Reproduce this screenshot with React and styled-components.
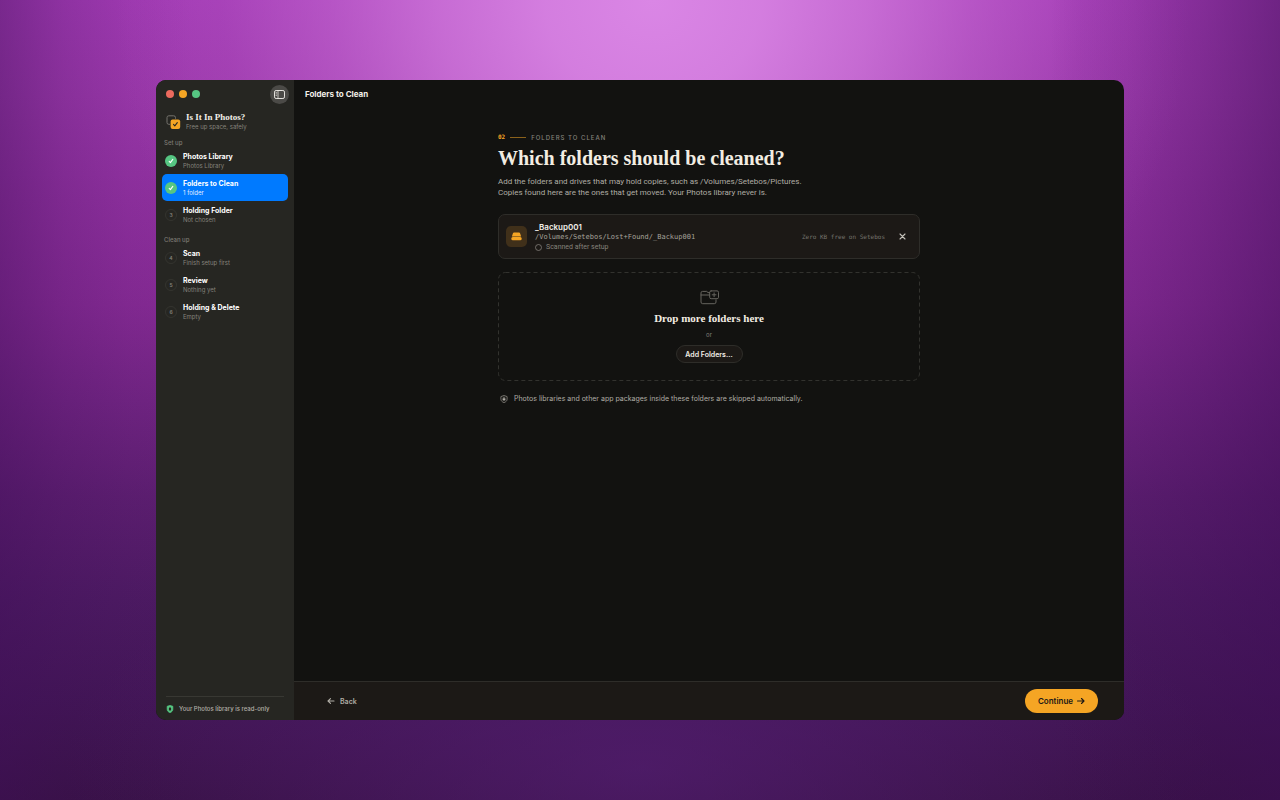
import React from 'react';
import styled, { createGlobalStyle, css } from 'styled-components';

const sans = 'Inter, "Liberation Sans", sans-serif';
const serif = '"Liberation Serif", serif';
const mono = '"DejaVu Sans Mono", monospace';

const GlobalStyle = createGlobalStyle`
  *, *::before, *::after { box-sizing: border-box; }
  body { margin: 0; font-family: ${sans}; font-size: 7px; color: #f2efe8; }
  h1, h2, h3, p, ul { margin: 0; padding: 0; }
  ul { list-style: none; }
  button { font-family: inherit; margin: 0; padding: 0; border: 0; background: none; color: inherit; cursor: pointer; }
  svg { display: block; flex: none; }
`;

const Desktop = styled.div`
  min-height: 100vh;
  display: flex;
  padding: 80px 156px;
  background:
    linear-gradient(90deg, rgba(64, 14, 88, 0.42) 0%, rgba(64, 14, 88, 0.2) 5%, rgba(64, 14, 88, 0.06) 10%, rgba(64, 14, 88, 0) 15%, rgba(60, 12, 84, 0) 82%, rgba(60, 12, 84, 0.12) 88%, rgba(60, 12, 84, 0.3) 94%, rgba(60, 12, 84, 0.5) 100%),
    radial-gradient(ellipse 42% 64% at 51% 0%, rgba(218, 134, 229, 1) 0%, rgba(216, 131, 227, 0.92) 20%, rgba(212, 124, 223, 0.74) 40%, rgba(204, 112, 216, 0.48) 60%, rgba(192, 96, 206, 0.2) 80%, rgba(180, 80, 196, 0) 100%),
    radial-gradient(ellipse 45% 32% at 50% 96%, rgba(88, 32, 120, 0.6) 0%, rgba(80, 28, 110, 0) 100%),
    linear-gradient(180deg, #a23bb4 0%, #9a38aa 12%, #8e309e 25%, #842a93 38%, #702482 50%, #5c1e70 62%, #4c1a62 75%, #421656 87%, #381246 100%);
`;

const Window = styled.div`
  flex: 1;
  display: flex;
  overflow: hidden;
  border-radius: 10px;
  background: #121210;
`;

const Sidebar = styled.aside`
  width: 138px;
  flex: none;
  display: flex;
  flex-direction: column;
  background: #262622;
`;

const SidebarBar = styled.div`
  height: 28px;
  display: flex;
  align-items: center;
  gap: 5px;
  padding: 0 5px 0 10px;
`;

const Light = styled.button`
  && { background: ${(p) => p.$color}; }
  width: 8px;
  height: 8px;
  border-radius: 50%;
`;

const ToggleButton = styled.button`
  && { background: #4b4a47; }
  width: 19px;
  height: 19px;
  margin-left: auto;
  border-radius: 50%;
  display: grid;
  place-items: center;
`;

const Brand = styled.div`
  display: flex;
  align-items: center;
  gap: 5px;
  height: 27px;
  padding: 0 10px;
`;

const BrandName = styled.div`
  font: bold 9px/10px ${serif};
  color: #f2efe8;
`;

const Muted = styled.div`
  font-size: 6px;
  line-height: 9px;
  color: ${(p) => p.$color || '#85827b'};
`;

const GroupTitle = styled.h2`
  font-size: 6px;
  line-height: 8px;
  font-weight: 500;
  color: #7d7a73;
  padding: 0 8px;
  margin: ${(p) => (p.$later ? '8px' : '4px')} 0 0;
`;

const Step = styled.button`
  && { background: ${(p) => (p.$active ? '#007aff' : 'transparent')}; }
  width: calc(100% - 12px);
  height: 27px;
  margin: 0 6px;
  padding: 0 3px;
  display: flex;
  align-items: center;
  gap: 6px;
  border-radius: 5px;
  text-align: left;
`;

const StepName = styled.div`
  font-size: 7px;
  line-height: 9px;
  font-weight: 700;
  color: #fff;
`;

const Marker = styled.span`
  width: 12px;
  height: 12px;
  flex: none;
  display: grid;
  place-items: center;
  border-radius: 50%;
  font-size: 5px;
  font-weight: 600;
  color: #85827b;
  ${(p) => (p.$done ? css`background: #56c682;` : css`border: 1px solid #34342f;`)}
`;

const SidebarFoot = styled.div`
  margin: auto 10px 0;
  height: 24px;
  border-top: 1px solid #383833;
  display: flex;
  align-items: center;
  gap: 5px;
  font-size: 6px;
  font-weight: 500;
  color: #b3b0a8;
`;

const Main = styled.main`
  flex: 1;
  min-width: 0;
  display: flex;
  flex-direction: column;
`;

const TitleBar = styled.header`
  height: 28px;
  flex: none;
  padding: 0 11px;
  display: flex;
  align-items: center;
  font-size: 8px;
  font-weight: 700;
`;

const Content = styled.section`
  flex: 1;
  width: 100%;
  max-width: 422px;
  margin: 0 auto;
  padding-top: 24px;
`;

const Eyebrow = styled.div`
  display: flex;
  align-items: center;
  gap: 5px;
  height: 10px;
  font-size: 6px;
  font-weight: 500;
  letter-spacing: 1px;
  color: #85827b;
`;

const StepNumber = styled.span`
  font: bold 6px/10px ${mono};
  letter-spacing: 0;
  color: #f5a524;
`;

const Rule = styled.span`
  width: 16px;
  height: 1px;
  background: #8a611b;
`;

const Heading = styled.h1`
  margin-top: 3px;
  font: bold 20px/26px ${serif};
  color: #f2ede2;
`;

const Lead = styled.p`
  margin-top: 5px;
  font: 8px/11px Roboto, ${sans};
  color: #b0ada5;
`;

const FolderRow = styled.article`
  margin-top: 16px;
  height: 45px;
  display: flex;
  align-items: center;
  gap: 8px;
  padding: 0 12px 0 7px;
  border: 1px solid #2e2d29;
  border-radius: 7px;
  background: #1c1916;
`;

const Tile = styled.span`
  width: 21px;
  height: 21px;
  display: grid;
  place-items: center;
  border-radius: 5px;
  background: #40301a;
`;

const FolderInfo = styled.div`
  flex: 1;
  padding-top: 2px;
`;

const FolderName = styled.h3`
  font-size: 8px;
  line-height: 10px;
  font-weight: 600;
`;

const Mono = styled.div`
  font: ${(p) => p.$size}px/10px ${mono};
  color: ${(p) => p.$color};
`;

const Status = styled.div`
  display: flex;
  align-items: center;
  gap: 4px;
  font: 7px/11px Roboto, ${sans};
  color: #85827b;
`;

const RemoveButton = styled.button`
  width: 10px;
  height: 10px;
  margin-left: 4px;
  display: grid;
  place-items: center;
`;

const DropZone = styled.div`
  position: relative;
  margin-top: 13px;
  height: 109px;
  display: flex;
  flex-direction: column;
  align-items: center;
  padding-top: 18px;
`;

const Dashes = styled.svg`
  position: absolute;
  inset: 0;
  width: 100%;
  height: 100%;
`;

const DashedEdge = styled.rect`
  width: calc(100% - 1px);
  height: calc(100% - 1px);
  fill: none;
  stroke: #32322e;
  stroke-dasharray: 4 3;
`;

const DropTitle = styled.h3`
  margin-top: 6px;
  font: bold 11px/14px ${serif};
  color: #f2ede2;
`;

const Or = styled.p`
  margin: 6px 0;
  font-size: 6px;
  line-height: 8px;
  color: #85827b;
`;

const AddButton = styled.button`
  && { background: #1c1916; border: 1px solid #2e2d29; }
  width: 67px;
  height: 18px;
  border-radius: 9px;
  font-size: 7px;
  font-weight: 600;
`;

const Note = styled.p`
  margin-top: 13px;
  padding-left: 2px;
  display: flex;
  align-items: center;
  gap: 6px;
  font-size: 7px;
  line-height: 10px;
  color: #b0ada5;
`;

const Footer = styled.footer`
  height: 39px;
  flex: none;
  padding: 0 26px 0 33px;
  display: flex;
  align-items: center;
  justify-content: space-between;
  border-top: 1px solid #2e2d29;
  background: #1c1916;
`;

const BackButton = styled.button`
  display: flex;
  align-items: center;
  gap: 5px;
  font-size: 7px;
  font-weight: 600;
  && { color: #b0ada5; }
`;

const ContinueButton = styled.button`
  && { background: #f5a524; color: #1c1916; }
  width: 73px;
  height: 24px;
  display: flex;
  align-items: center;
  justify-content: center;
  gap: 4px;
  border-radius: 12px;
  font-size: 8px;
  font-weight: 600;
`;

const Check = () => (
  <svg width="6" height="6" viewBox="0 0 6 6" fill="none" stroke="#fff" strokeWidth="1.1" strokeLinecap="round" strokeLinejoin="round">
    <path d="M1.2 3.3 2.4 4.6 4.8 1.4" />
  </svg>
);

const Arrow = ({ back }) => (
  <svg width="8" height="8" viewBox="0 0 8 8" fill="none" stroke="currentColor" strokeWidth="1.1" strokeLinecap="round" strokeLinejoin="round">
    <path d={back ? 'M7 4H1M3.5 1.6 1 4l2.5 2.4' : 'M.5 4H7M4.5 1.5 7 4 4.5 6.5'} />
  </svg>
);

const SidebarIcon = () => (
  <svg width="11" height="9" viewBox="0 0 11 9" fill="none" stroke="#e4e2dd" strokeWidth="1">
    <rect x=".5" y=".5" width="10" height="8" rx="1.6" />
    <path d="M4 .5v8M1.6 2.4h1.2M1.6 3.9h1.2M1.6 5.4h1.2" strokeWidth=".8" />
  </svg>
);

const BrandIcon = () => (
  <svg width="15" height="14" viewBox="0 0 15 14" fill="none">
    <rect x="1" y=".8" width="8.5" height="8.5" rx="1.8" stroke="#75736d" strokeWidth="1" />
    <rect x="4" y="3.8" width="11" height="11" rx="2.6" fill="#262622" />
    <rect x="4.6" y="4.4" width="9.6" height="9.6" rx="2" fill="#f5a524" />
    <path d="m7.5 9.4 1.3 1.4 2.5-3.2" stroke="#262622" strokeWidth="1.1" strokeLinecap="round" strokeLinejoin="round" />
  </svg>
);

const LockShield = () => (
  <svg width="8" height="8" viewBox="0 0 8 8">
    <path d="M4 .5 6.8 1.3v3C6.8 6 5.7 7 4 7.6 2.3 7 1.2 6 1.2 4.3v-3Z" fill="#56c682" stroke="#56c682" strokeWidth=".8" strokeLinejoin="round" />
    <rect x="2.9" y="2.6" width="2.2" height="2.8" rx=".5" fill="#262622" />
  </svg>
);

const ShieldOutline = () => (
  <svg width="8" height="8" viewBox="0 0 8 8">
    <path d="M4 .5 7.1 1.6v2.6C7.1 5.8 5.8 7 4 7.6 2.2 7 .9 5.8.9 4.2V1.6Z" fill="none" stroke="#8b8881" strokeWidth=".8" strokeLinejoin="round" />
    <rect x="2.6" y="3.2" width="2.8" height="2.3" rx=".4" fill="#b0ada5" />
    <path d="M3.2 3.3v-.4a.8.8 0 0 1 1.6 0v.4" fill="none" stroke="#b0ada5" strokeWidth=".5" />
  </svg>
);

const DriveIcon = () => (
  <svg width="11" height="9" viewBox="0 0 11 9" fill="#f5a524">
    <path d="M3.600.6h3.800c1 0 1.600.5 1.900 1.300l.8 2.600H.9l.8-2.600C2 1.100 2.600.6 3.600.6Z" />
    <rect x=".3" y="5" width="10.400" height="3.300" rx="1.500" />
  </svg>
);

const FolderPlus = () => (
  <svg width="20" height="15" viewBox="0 0 20 15" fill="none" stroke="#66645e" strokeWidth="1" strokeLinecap="round" strokeLinejoin="round">
    <path d="M10.500 2.600H9L7.700 1.400H3.500A1.500 1.500 0 0 0 2 2.900v9.100a1.700 1.700 0 0 0 1.700 1.700h11.600a1.700 1.700 0 0 0 1.700-1.700V9.800M2 5h8.500" />
    <rect x="10.700" y=".9" width="8.800" height="7.800" rx="1.400" />
    <path d="M15.100 2.900v3.800M13.200 4.800H17" />
  </svg>
);

const StepItem = ({ name, detail, number, done, active }) => (
  <li>
    <Step type="button" $active={active} aria-current={active ? 'step' : undefined}>
      <Marker $done={done}>{done ? <Check /> : number}</Marker>
      <div>
        <StepName>{name}</StepName>
        <Muted $color={active ? '#e4efff' : undefined}>{detail}</Muted>
      </div>
    </Step>
  </li>
);

export default function App() {
  return (
    <>
      <GlobalStyle />
      <Desktop>
        <Window>
          <Sidebar>
            <SidebarBar>
              <Light type="button" aria-label="Close" $color="#ec6a5e" />
              <Light type="button" aria-label="Minimize" $color="#f5a524" />
              <Light type="button" aria-label="Zoom" $color="#56c682" />
              <ToggleButton type="button" aria-label="Toggle sidebar"><SidebarIcon /></ToggleButton>
            </SidebarBar>
            <Brand>
              <BrandIcon />
              <div>
                <BrandName>Is It In Photos?</BrandName>
                <Muted>Free up space, safely</Muted>
              </div>
            </Brand>
            <nav aria-label="Steps">
              <GroupTitle>Set up</GroupTitle>
              <ul>
                <StepItem name="Photos Library" detail="Photos Library" done />
                <StepItem name="Folders to Clean" detail="1 folder" done active />
                <StepItem name="Holding Folder" detail="Not chosen" number="3" />
              </ul>
              <GroupTitle $later>Clean up</GroupTitle>
              <ul>
                <StepItem name="Scan" detail="Finish setup first" number="4" />
                <StepItem name="Review" detail="Nothing yet" number="5" />
                <StepItem name="Holding &amp; Delete" detail="Empty" number="6" />
              </ul>
            </nav>
            <SidebarFoot><LockShield />Your Photos library is read-only</SidebarFoot>
          </Sidebar>
          <Main>
            <TitleBar>Folders to Clean</TitleBar>
            <Content>
              <Eyebrow><StepNumber>02</StepNumber><Rule />FOLDERS TO CLEAN</Eyebrow>
              <Heading>Which folders should be cleaned?</Heading>
              <Lead>
                Add the folders and drives that may hold copies, such as /Volumes/Setebos/Pictures.<br />
                Copies found here are the ones that get moved. Your Photos library never is.
              </Lead>
              <FolderRow>
                <Tile><DriveIcon /></Tile>
                <FolderInfo>
                  <FolderName>_Backup001</FolderName>
                  <Mono $size={7} $color="#a5a29a">/Volumes/Setebos/Lost+Found/_Backup001</Mono>
                  <Status>
                    <svg width="7" height="7" viewBox="0 0 7 7" fill="none" stroke="#85827b" strokeWidth=".8"><circle cx="3.5" cy="3.5" r="3" /></svg>
                    Scanned after setup
                  </Status>
                </FolderInfo>
                <Mono $size={6} $color="#75736d">Zero KB free on Setebos</Mono>
                <RemoveButton type="button" aria-label="Remove _Backup001">
                  <svg width="7" height="7" viewBox="0 0 7 7" stroke="#c4c1b9" strokeWidth="1.1" strokeLinecap="round"><path d="m1 1 5 5M6 1 1 6" /></svg>
                </RemoveButton>
              </FolderRow>
              <DropZone>
                <Dashes aria-hidden="true">
                  <DashedEdge x="0.5" y="0.5" rx="7" />
                </Dashes>
                <FolderPlus />
                <DropTitle>Drop more folders here</DropTitle>
                <Or>or</Or>
                <AddButton type="button">Add Folders...</AddButton>
              </DropZone>
              <Note><ShieldOutline />Photos libraries and other app packages inside these folders are skipped automatically.</Note>
            </Content>
            <Footer>
              <BackButton type="button"><Arrow back />Back</BackButton>
              <ContinueButton type="button">Continue<Arrow /></ContinueButton>
            </Footer>
          </Main>
        </Window>
      </Desktop>
    </>
  );
}
